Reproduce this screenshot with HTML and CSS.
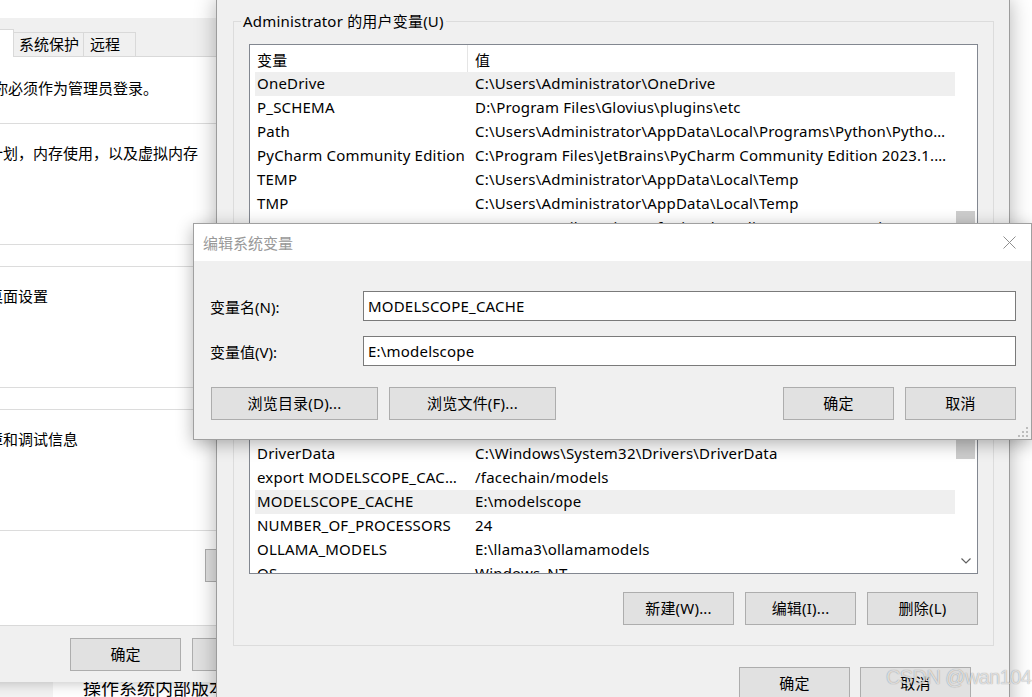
FILE: index.html
```html
<!DOCTYPE html>
<html lang="zh-CN">
<head>
    <meta charset="UTF-8">
    <meta name="viewport" content="width=device-width, initial-scale=1.0">
    <title>环境变量</title>
    <link rel="stylesheet" href="styles.css">
</head>
<body>
    <!-- settings page behind everything -->
    <div class="settings">
        <div class="settings-nav"></div>
        <div class="settings-main">操作系统内部版本</div>
    </div>

    <!-- system properties -->
    <div class="sysprops">
        <div class="sp-title"></div>
        <div class="sp-tabs">
            <div class="tab tab-name">计算机名</div>
            <div class="tab tab-hw">硬件</div>
            <div class="tab tab-active">高级</div>
            <div class="tab tab-protect">系统保护</div>
            <div class="tab tab-remote">远程</div>
        </div>
        <div class="sp-page">
            <div class="sp-note">要进行大多数更改，你必须作为管理员登录。</div>
            <fieldset class="sp-group">
                <legend>性能</legend>
                <div class="sp-text">视觉效果，处理器计划，内存使用，以及虚拟内存</div>
                <div class="sp-actions"><button class="btn">设置(S)...</button></div>
            </fieldset>
            <fieldset class="sp-group">
                <legend>用户配置文件</legend>
                <div class="sp-text">与登录帐户相关的桌面设置</div>
                <div class="sp-actions"><button class="btn">设置(E)...</button></div>
            </fieldset>
            <fieldset class="sp-group">
                <legend>启动和故障恢复</legend>
                <div class="sp-text">系统启动、系统故障和调试信息</div>
                <div class="sp-actions"><button class="btn">设置(T)...</button></div>
            </fieldset>
            <div class="sp-env"><button class="btn btn-env">环境变量(N)...</button></div>
        </div>
        <div class="sp-footer">
            <button class="btn">确定</button>
            <button class="btn">取消</button>
            <button class="btn">应用(A)</button>
        </div>
    </div>

    <!-- environment variables -->
    <div class="envvars">
        <fieldset class="group">
            <legend>Administrator 的用户变量(U)</legend>
            <div class="list list-user">
                <div class="list-rows">
                    <div class="list-head">
                        <div class="col-name">变量</div>
                        <div class="col-value">值</div>
                    </div>
                    <div class="row selected"><div class="col-name">OneDrive</div><div class="col-value">C:\Users\Administrator\OneDrive</div></div>
                    <div class="row"><div class="col-name">P_SCHEMA</div><div class="col-value">D:\Program Files\Glovius\plugins\etc</div></div>
                    <div class="row"><div class="col-name">Path</div><div class="col-value">C:\Users\Administrator\AppData\Local\Programs\Python\Python310\Scripts\;C:\Users\Administrator\AppData\Local\Programs\Python\Python310\</div></div>
                    <div class="row"><div class="col-name">PyCharm Community Edition</div><div class="col-value">C:\Program Files\JetBrains\PyCharm Community Edition 2023.1.2\bin;</div></div>
                    <div class="row"><div class="col-name">TEMP</div><div class="col-value">C:\Users\Administrator\AppData\Local\Temp</div></div>
                    <div class="row"><div class="col-name">TMP</div><div class="col-value">C:\Users\Administrator\AppData\Local\Temp</div></div>
                    <div class="row"><div class="col-name">VS170COMNTOOLS</div><div class="col-value">C:\Program Files\Microsoft Visual Studio\2022\Community\Common7\Tools\</div></div>
                </div>
                <div class="scrollbar">
                    <div class="thumb thumb-user"></div>
                </div>
            </div>
            <div class="actions">
                <button class="btn">新建(N)...</button>
                <button class="btn">编辑(E)...</button>
                <button class="btn">删除(D)</button>
            </div>
        </fieldset>

        <fieldset class="group group-system">
            <legend>系统变量(S)</legend>
            <div class="list list-system">
                <div class="list-rows">
                    <div class="list-head">
                        <div class="col-name">变量</div>
                        <div class="col-value">值</div>
                    </div>
                    <div class="row"><div class="col-name">ComSpec</div><div class="col-value">C:\Windows\system32\cmd.exe</div></div>
                    <div class="row"><div class="col-name">CUDA_PATH_V12_1</div><div class="col-value">C:\Program Files\NVIDIA GPU Computing Toolkit\CUDA\v12.1</div></div>
                    <div class="row"><div class="col-name">DriverData</div><div class="col-value">C:\Windows\System32\Drivers\DriverData</div></div>
                    <div class="row"><div class="col-name col-cut">export MODELSCOPE_CACHE</div><div class="col-value">/facechain/models</div></div>
                    <div class="row selected"><div class="col-name">MODELSCOPE_CACHE</div><div class="col-value">E:\modelscope</div></div>
                    <div class="row"><div class="col-name">NUMBER_OF_PROCESSORS</div><div class="col-value">24</div></div>
                    <div class="row"><div class="col-name">OLLAMA_MODELS</div><div class="col-value">E:\llama3\ollamamodels</div></div>
                    <div class="row"><div class="col-name">OS</div><div class="col-value">Windows_NT</div></div>
                </div>
                <div class="scrollbar">
                    <div class="thumb thumb-system"></div>
                    <svg class="chevron" width="10" height="6" viewBox="0 0 10 6">
                        <polyline points="0.5,0.5 5,5 9.5,0.5" fill="none" stroke="#606060" stroke-width="1.2"/>
                    </svg>
                </div>
            </div>
            <div class="actions">
                <button class="btn">新建(W)...</button>
                <button class="btn">编辑(I)...</button>
                <button class="btn">删除(L)</button>
            </div>
        </fieldset>

        <div class="env-footer">
            <button class="btn">确定</button>
            <button class="btn">取消</button>
        </div>
    </div>

    <!-- edit dialog -->
    <div class="editdlg">
        <div class="dlg-title">
            <span>编辑系统变量</span>
            <svg class="dlg-close" width="13" height="13" viewBox="0 0 13 13">
                <path d="M0.5 0.5 L12.5 12.5 M12.5 0.5 L0.5 12.5" stroke="#8f8f8f" stroke-width="1" fill="none"/>
            </svg>
        </div>
        <div class="dlg-body">
            <div class="dlg-form">
                <label for="var-name">变量名(N):</label>
                <input type="text" id="var-name" value="MODELSCOPE_CACHE">
                <label for="var-value">变量值(V):</label>
                <input type="text" id="var-value" value="E:\modelscope">
            </div>
            <div class="dlg-buttons">
                <div class="dlg-left">
                    <button class="btn btn-wide">浏览目录(D)...</button>
                    <button class="btn btn-wide">浏览文件(F)...</button>
                </div>
                <div class="dlg-right">
                    <button class="btn">确定</button>
                    <button class="btn">取消</button>
                </div>
            </div>
        </div>
        <svg class="grip" width="12" height="12" viewBox="0 0 12 12">
            <rect x="9" y="1" width="2" height="2" fill="#bdbdbd"/>
            <rect x="5" y="5" width="2" height="2" fill="#bdbdbd"/>
            <rect x="9" y="5" width="2" height="2" fill="#bdbdbd"/>
            <rect x="1" y="9" width="2" height="2" fill="#bdbdbd"/>
            <rect x="5" y="9" width="2" height="2" fill="#bdbdbd"/>
            <rect x="9" y="9" width="2" height="2" fill="#bdbdbd"/>
        </svg>
    </div>

    <div class="watermark">CSDN @wan104</div>
</body>
</html>
```

FILE: styles.css
```css
* {
    box-sizing: border-box;
}
body {
    margin: 0;
    width: 1032px;
    height: 697px;
    overflow: hidden;
    position: relative;
    background: #ffffff;
    font-family: "Noto Sans", "Noto Sans CJK SC", sans-serif;
    font-size: 15px;
    color: #000000;
}
button,
input {
    font-family: inherit;
    font-size: 15px;
    letter-spacing: inherit;
    color: #000000;
}
.btn {
    width: 111px;
    height: 33px;
    padding: 0;
    background: #e1e1e1;
    border: 1px solid #adadad;
    border-radius: 0;
    line-height: 31px;
}
.btn-wide {
    width: 167px;
}
fieldset {
    margin: 0;
    border: 1px solid #dcdcdc;
    min-width: 0;
}
legend {
    padding: 0 2px;
    line-height: 20px;
}

/* settings window at the very back */
.settings {
    position: absolute;
    left: 0;
    top: 640px;
    width: 300px;
    height: 80px;
    display: flex;
    z-index: 1;
}
.settings-nav {
    width: 53px;
    background: #f3f3f3;
}
.settings-main {
    flex: 1;
    background: #ffffff;
    padding: 36px 0 0 30px;
    font-size: 18px;
    line-height: 24px;
    white-space: nowrap;
}

/* system properties */
.sysprops {
    position: absolute;
    left: -170px;
    top: 0;
    width: 612px;
    height: 682px;
    background: #f0f0f0;
    box-shadow: 0 0 14px rgba(0, 0, 0, 0.28);
    z-index: 2;
}
.sp-title {
    height: 18px;
    background: #ffffff;
}
.sp-tabs {
    height: 38px;
    display: flex;
    align-items: flex-end;
    padding-left: 8px;
}
.tab {
    height: 24px;
    line-height: 23px;
    padding-left: 5px;
    border: 1px solid #d9d9d9;
    border-bottom: none;
    border-left: none;
    white-space: nowrap;
}
.tab-name {
    width: 70px;
    border-left: 1px solid #d9d9d9;
}
.tab-hw {
    width: 46px;
}
.tab-active {
    width: 60px;
    height: 28px;
    margin-bottom: -1px;
    background: #ffffff;
    position: relative;
    z-index: 1;
    line-height: 26px;
}
.tab-protect {
    width: 70px;
}
.tab-remote {
    width: 52px;
    padding-left: 6px;
}
.sp-page {
    height: 570px;
    margin: 0 8px;
    padding: 21px 12px 0;
    background: #ffffff;
    border: 1px solid #d9d9d9;
}
.sp-note {
    margin-left: 7px;
    line-height: 20px;
    white-space: nowrap;
}
.sp-group {
    margin-top: 11px;
    padding: 10px 16px 36px;
}
.sp-note + .sp-group {
    margin-top: 15px;
}
.sp-group legend {
    margin-left: -4px;
}
.sp-text {
    line-height: 20px;
    white-space: nowrap;
}
.sp-actions {
    display: flex;
    justify-content: flex-end;
    margin-top: 12px;
}
.sp-env {
    margin-top: 18px;
    padding-left: 354px;
}
.btn-env {
    width: 130px;
}
.sp-footer {
    display: flex;
    justify-content: flex-end;
    gap: 11px;
    padding: 12px 17px 0 0;
}

/* environment variables window */
.envvars {
    position: absolute;
    left: 216px;
    top: -1px;
    width: 794px;
    height: 720px;
    padding: 11px 15px 0 16px;
    background: #f0f0f0;
    border: 1px solid #9c9c9c;
    box-shadow: 0 0 20px rgba(0, 0, 0, 0.3);
    letter-spacing: 0.2px;
    z-index: 3;
}
.group {
    padding: 13px 15px 20px;
}
.group legend {
    margin-left: -8px;
}
.group-system {
    margin-top: 20px;
}
.list {
    display: flex;
    background: #ffffff;
    border: 1px solid #828790;
    overflow: hidden;
}
.list-user {
    height: 197px;
}
.list-system {
    height: 208px;
}
.list-rows {
    flex: 1;
    min-width: 0;
}
.list-head {
    display: flex;
    height: 27px;
    padding-top: 3px;
    line-height: 24px;
}
.list-head .col-name {
    width: 218px;
    padding-left: 7px;
    border-right: 1px solid #e5e5e5;
    margin-top: -3px;
    padding-top: 3px;
}
.list-head .col-value {
    padding-left: 7px;
}
.row {
    display: flex;
    height: 24px;
    line-height: 23px;
    margin-left: 5px;
    white-space: nowrap;
}
.row.selected {
    background: #efefef;
}
.row .col-name {
    width: 212px;
    flex-shrink: 0;
    padding: 0 0 0 2px;
    overflow: hidden;
    text-overflow: ellipsis;
}
/* this name is wider than its column in the original font */
.row .col-cut {
    padding-right: 9px;
}
.row .col-value {
    flex: 1;
    min-width: 0;
    padding: 0 4px 0 8px;
    overflow: hidden;
    text-overflow: ellipsis;
}
.scrollbar {
    width: 22px;
    display: flex;
    flex-direction: column;
    align-items: center;
    background: #ffffff;
}
.thumb {
    width: 19px;
    margin-left: -1px;
    background: #cdcdcd;
}
.thumb-user {
    margin-top: 166px;
    height: 40px;
}
.thumb-system {
    margin-top: 28px;
    height: 64px;
}
.chevron {
    margin-top: auto;
    margin-bottom: 9px;
}
.actions {
    display: flex;
    justify-content: flex-end;
    gap: 11px;
    margin-top: 18px;
}
.env-footer {
    display: flex;
    justify-content: flex-end;
    gap: 10px;
    margin-top: 21px;
    padding-right: 23px;
}

/* edit dialog */
.editdlg {
    position: absolute;
    left: 193px;
    top: 223px;
    width: 839px;
    height: 217px;
    background: #f0f0f0;
    border: 1px solid #a0a0a0;
    box-shadow: 0 4px 16px rgba(0, 0, 0, 0.3);
    letter-spacing: 0.2px;
    z-index: 4;
}
.dlg-title {
    height: 37px;
    display: flex;
    align-items: center;
    justify-content: space-between;
    padding: 0 15px 0 9px;
    background: #ffffff;
    color: #999999;
    letter-spacing: 0;
}
.dlg-body {
    padding: 30px 15px 0 17px;
}
.dlg-form {
    display: grid;
    grid-template-columns: 152px 1fr;
    row-gap: 15px;
    align-items: center;
}
.dlg-form label {
    margin-left: -1px;
    letter-spacing: 0;
}
.dlg-form input {
    height: 30px;
    padding: 0 4px 1px;
    border: 1px solid #7a7a7a;
    border-radius: 0;
    background: #ffffff;
    outline: none;
}
.dlg-buttons {
    display: flex;
    justify-content: space-between;
    margin-top: 21px;
}
.dlg-left,
.dlg-right {
    display: flex;
    gap: 11px;
}
.grip {
    position: absolute;
    right: 2px;
    bottom: 1px;
}

.watermark {
    position: absolute;
    left: 886px;
    top: 667px;
    font-family: "Liberation Sans", sans-serif;
    font-size: 20px;
    line-height: 20px;
    letter-spacing: -0.6px;
    color: rgba(255, 255, 255, 0.7);
    text-shadow: 0 0 1px rgba(0, 0, 0, 0.45);
    white-space: nowrap;
    z-index: 5;
}
```
